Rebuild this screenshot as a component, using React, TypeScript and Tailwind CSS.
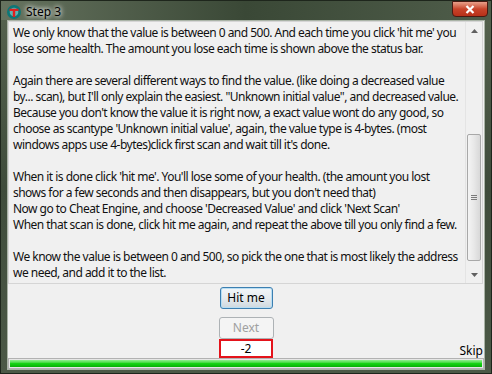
import React from 'react'

const lines = [
  "We only know that the value is between 0 and 500. And each time you click 'hit me' you",
  'lose some health. The amount you lose each time is shown above the status bar.',
  '',
  'Again there are several different ways to find the value. (like doing a decreased value',
  'by... scan), but I\'ll only explain the easiest. "Unknown initial value", and decreased value.',
  "Because you don't know the value it is right now, a exact value wont do any good, so",
  "choose as scantype 'Unknown initial value', again, the value type is 4-bytes. (most",
  "windows apps use 4-bytes)click first scan and wait till it's done.",
  '',
  "When it is done click 'hit me'. You'll lose some of your health. (the amount you lost",
  "shows for a few seconds and then disappears, but you don't need that)",
  "Now go to Cheat Engine, and choose 'Decreased Value' and click 'Next Scan'",
  'When that scan is done, click hit me again, and repeat the above till you only find a few.',
  '',
  'We know the value is between 0 and 500, so pick the one that is most likely the address',
  'we need, and add it to the list.',
]

function CeIcon() {
  return (
    <svg width="16" height="16" viewBox="0 0 16 16">
      <circle cx="8" cy="8" r="7" fill="#0d7777" />
      <circle cx="8" cy="8" r="4.3" fill="#5fb3b3" />
      <path d="M3.5 4.8h9v2.2H9.2v6H6.8V7H3.5z" fill="#e02020" />
    </svg>
  )
}

function Scrollbar() {
  return (
    <div className="w-[17px] flex flex-col bg-[#f0f0f0] border-l border-[#e4e4e4]">
      <div className="h-[17px] flex items-center justify-center">
        <svg width="7" height="4" viewBox="0 0 7 4"><path d="M0 4L3.5 0L7 4z" fill="#606060" /></svg>
      </div>
      <div className="h-[95px]" />
      <div className="h-[127px] mx-[1px] rounded-[2px] border border-[#a8a8a8] bg-gradient-to-r from-[#f4f4f4] via-[#e8e8e8] to-[#d8d8d8] flex items-center justify-center">
        <div className="flex flex-col gap-[1px]">
          <div className="w-[6px] h-[1px] bg-[#7a7a7a]" />
          <div className="w-[6px] h-[1px] bg-[#7a7a7a]" />
          <div className="w-[6px] h-[1px] bg-[#7a7a7a]" />
        </div>
      </div>
      <div className="flex-1" />
      <div className="h-[17px] flex items-center justify-center">
        <svg width="7" height="4" viewBox="0 0 7 4"><path d="M0 0L3.5 4L7 0z" fill="#606060" /></svg>
      </div>
    </div>
  )
}

export default function App() {
  return (
    <div
      className="w-[492px] h-[374px] flex flex-col bg-gradient-to-b from-[#56634f] via-[#3f4c3b] to-[#4c5947] border border-[#1e261c] overflow-hidden"
      style={{ fontFamily: '"Noto Sans", "Open Sans", sans-serif' }}
    >
      <div className="h-[21px] flex items-start relative bg-gradient-to-r from-[#66735f] via-[#3a4836] to-[#4f5d4a]">
        <div className="flex items-center gap-[4px] pl-[5px] pt-[3px]">
          <CeIcon />
          <span className="text-[12px] leading-[14px] text-black [text-shadow:0_0_6px_#fff,0_0_4px_#fff]">Step 3</span>
        </div>
        <div className="ml-auto mr-[3px] w-[36px] h-[16px] rounded-b-[4px] border border-[#4a1a12] bg-gradient-to-b from-[#e8a08a] via-[#c8442a] to-[#b83018] flex items-center justify-center">
          <svg width="10" height="9" viewBox="0 0 10 9">
            <path d="M1.5 1L8.5 8M8.5 1L1.5 8" stroke="#fff" strokeWidth="2.2" />
          </svg>
        </div>
      </div>
      <div className="flex-1 flex flex-col mx-[6px] mb-[6px] bg-[#f0f0f0] border border-[#a9b3a6]">
        <div className="h-[263px] flex border border-[#d5d5d5] mr-[1px]">
          <div className="flex-1 px-[4px] pt-[3px] text-[12px] leading-[16px] text-[#111] tracking-[-0.52px] whitespace-nowrap overflow-hidden">
            {lines.map((l, i) => (
              <div key={i} className="h-[16px]">{l}</div>
            ))}
          </div>
          <Scrollbar />
        </div>
        <div className="flex-1 grid grid-cols-[1fr_auto_1fr]">
          <div />
          <div className="flex flex-col items-center pt-[3px]">
            <button className="w-[53px] h-[22px] rounded-[3px] border border-[#3c7fb1] bg-gradient-to-b from-[#f2f6f9] via-[#e6ebef] to-[#cfd8de] text-[12px] text-black shadow-[inset_0_0_0_1px_#b8def3]">
              Hit me
            </button>
            <button className="mt-[8px] w-[55px] h-[22px] rounded-[3px] border border-[#adb2b5] bg-[#f4f4f4] text-[12px] text-[#a0a0a0]">
              Next
            </button>
            <div className="w-[54px] h-[19px] border-2 border-[#e4131b] bg-white text-[12px] leading-[15px] text-black flex justify-center">
              -2
            </div>
          </div>
          <div className="flex items-end justify-end pr-[1px]">
            <span className="text-[12px] leading-[14px] text-black">Skip</span>
          </div>
        </div>
        <div className="h-[11px] border border-[#b2b2b2] bg-[#e6e6e6] p-[1px]">
          <div className="h-full bg-gradient-to-b from-[#8ff08f] via-[#16d416] to-[#06b006]" />
        </div>
      </div>
    </div>
  )
}
